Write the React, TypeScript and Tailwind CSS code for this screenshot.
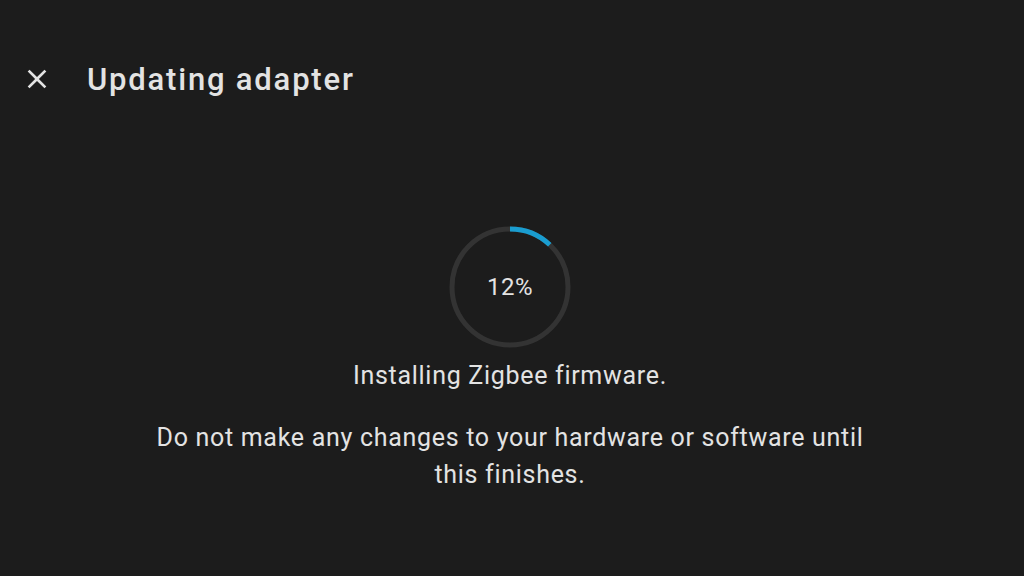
import React from "react";

const ProgressRing = ({ value }: { value: number }) => {
  const r = 58;
  const c = 2 * Math.PI * r;
  return (
    <div className="relative w-[124px] h-[124px]">
      <svg width="124" height="124" viewBox="0 0 124 124" className="-rotate-90">
        <circle cx="62" cy="62" r={r} fill="none" stroke="#333333" strokeWidth="5" />
        <circle
          cx="62"
          cy="62"
          r={r}
          fill="none"
          stroke="#1a9dd0"
          strokeWidth="5"
          strokeDasharray={`${(c * value) / 100} ${c}`}
        />
      </svg>
      <div className="absolute inset-0 flex items-center justify-center text-[24px] tracking-[0.5px] text-[#e3e3e3]">
        {value}%
      </div>
    </div>
  );
};

const App = () => {
  return (
    <div className="w-[1024px] h-[576px] bg-[#1c1c1c] text-[#e3e3e3] font-['Roboto',sans-serif] overflow-hidden">
      {/* Header */}
      <div className="flex items-center h-[56px] mt-[51px] pl-[21px]">
        <svg width="32" height="32" viewBox="0 0 24 24" className="text-[#e3e3e3]">
          <path
            d="M19 6.41 17.59 5 12 10.59 6.41 5 5 6.41 10.59 12 5 17.59 6.41 19 12 13.41 17.59 19 19 17.59 13.41 12z"
            fill="currentColor"
          />
        </svg>
        <h1 className="ml-[34px] text-[31px] font-medium tracking-[1.8px] leading-none">
          Updating adapter
        </h1>
      </div>

      {/* Body */}
      <div className="flex flex-col items-center mt-[118px] pr-[4px]">
        <ProgressRing value={12} />
        <p className="mt-[9px] text-[25px] tracking-[0.7px] leading-[36px]">
          Installing Zigbee firmware.
        </p>
        <p className="mt-[25px] text-[25px] tracking-[0.7px] leading-[37px] text-center w-[730px]">
          Do not make any changes to your hardware or software until this finishes.
        </p>
      </div>
    </div>
  );
};

export default App;
